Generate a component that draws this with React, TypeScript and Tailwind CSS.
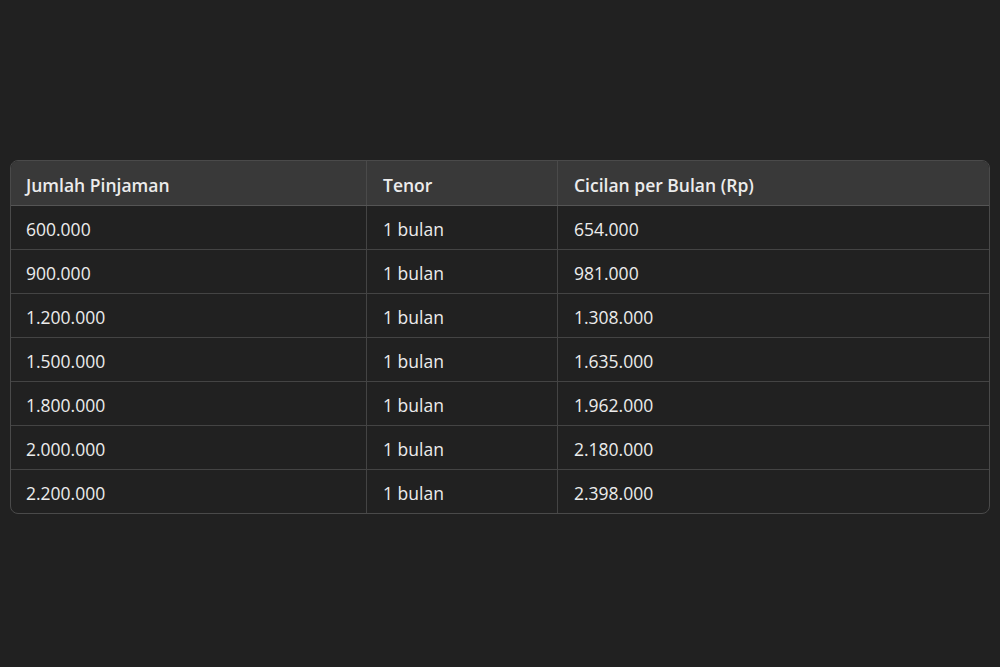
import React from "react";

const rows = [
  ["600.000", "1 bulan", "654.000"],
  ["900.000", "1 bulan", "981.000"],
  ["1.200.000", "1 bulan", "1.308.000"],
  ["1.500.000", "1 bulan", "1.635.000"],
  ["1.800.000", "1 bulan", "1.962.000"],
  ["2.000.000", "1 bulan", "2.180.000"],
  ["2.200.000", "1 bulan", "2.398.000"],
];

export default function App() {
  return (
    <div
      className="w-[1000px] h-[667px] bg-[#212121] px-[10px] pt-[160px] text-[#ececec]"
      style={{ fontFamily: "'Open Sans', 'Noto Sans', sans-serif" }}
    >
      <div className="rounded-lg border border-[#4a4a4a] overflow-hidden">
        <div className="grid grid-cols-[356px_191px_1fr] h-[45px] bg-[#393939] border-b border-[#555] font-semibold text-[17.5px]">
          <div className="flex items-center pl-[15px] pt-[4px] border-r border-[#4a4a4a]">Jumlah Pinjaman</div>
          <div className="flex items-center pl-[16px] pt-[4px] border-r border-[#4a4a4a]">Tenor</div>
          <div className="flex items-center pl-[16px] pt-[4px]">Cicilan per Bulan (Rp)</div>
        </div>
        {rows.map((r, i) => (
          <div
            key={i}
            className={
              i === rows.length - 1
                ? "grid grid-cols-[356px_191px_1fr] h-[43px] text-[17.5px]"
                : "grid grid-cols-[356px_191px_1fr] h-[44px] border-b border-[#444] text-[17.5px]"
            }
          >
            <div className="flex items-center pl-[15px] pt-[3px] border-r border-[#444]">{r[0]}</div>
            <div className="flex items-center pl-[16px] pt-[3px] border-r border-[#444]">{r[1]}</div>
            <div className="flex items-center pl-[16px] pt-[3px]">{r[2]}</div>
          </div>
        ))}
      </div>
    </div>
  );
}
